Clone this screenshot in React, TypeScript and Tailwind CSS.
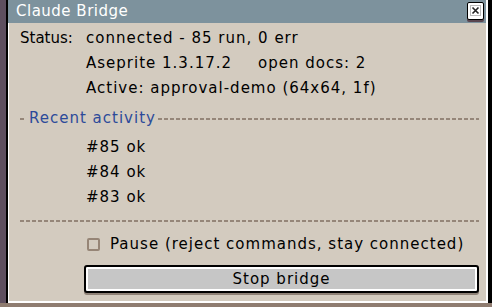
import type { ReactNode } from "react";

const dashes =
  "bg-[repeating-linear-gradient(90deg,#958679_0_4px,transparent_4px_6px)]";

function Row({ label, children }: { label?: string; children: ReactNode }) {
  return (
    <div className="flex h-[25px] items-center">
      <span className="w-[66px] shrink-0 tracking-normal">{label}</span>
      <span className="whitespace-pre">{children}</span>
    </div>
  );
}

export default function App() {
  const recent = [85, 84, 83];

  return (
    <div
      className="flex h-[307px] w-[492px] flex-col bg-[#8f7c70] text-[15px] tracking-[1px] text-black"
      style={{ fontFamily: '"DejaVu Sans", sans-serif' }}
    >
      <div className="flex flex-1">
        <div className="w-[6px] bg-[#5e4f5f]" />
        <div className="flex flex-1 flex-col border-l-2 border-r-4 border-black">
          {/* title bar */}
          <div className="flex h-[23px] items-center justify-between border-r-2 border-white bg-[#7d929d] pl-2 pr-[2px]">
            <span className="tracking-[0.5px] text-white">Claude Bridge</span>
            <div className="mb-[2px] flex h-[18px] w-[17px] items-center justify-center rounded-[2px] border border-black bg-white shadow-[0_2px_0_#5a4650]">
              <svg width="11" height="11" viewBox="0 0 11 11">
                <rect x="0.5" y="0.5" width="10" height="10" fill="none" stroke="#bbb" />
                <path d="M2.5 2.5 L8.5 8.5 M8.5 2.5 L2.5 8.5" stroke="#222" strokeWidth="1.6" />
              </svg>
            </div>
          </div>

          {/* body */}
          <div className="flex flex-1 flex-col border-b-2 border-l border-r-2 border-white bg-[#d3cbbf] pl-[11px] pr-[7px] pt-[3px]">
            <Row label="Status:">connected - 85 run, 0 err</Row>
            <Row>
              Aseprite 1.3.17.2<span className="ml-[26px]">open docs: 2</span>
            </Row>
            <Row>Active: approval-demo (64x64, 1f)</Row>

            <div className="mt-[5px] flex h-[25px] items-center">
              <div className={`h-[2px] w-[6px] ${dashes}`} />
              <span className="ml-[3px] mr-[2px] text-[#2c4a9a]">Recent activity</span>
              <div className={`h-[2px] flex-1 ${dashes}`} />
            </div>

            <div className="mt-[4px] flex flex-col">
              {recent.map((n) => (
                <Row key={n}>#{n} ok</Row>
              ))}
            </div>

            <div className={`mt-[10px] h-[2px] ${dashes}`} />

            <div className="mt-[10px] flex h-[25px] items-center pl-[67px]">
              <div className="h-[13px] w-[13px] rounded-[2px] border-2 border-[#968576]" />
              <span className="ml-[10px]">Pause (reject commands, stay connected)</span>
            </div>

            <div className="ml-[64px] mt-[8px] flex h-[28px] items-center justify-center rounded-[3px] border-2 border-black bg-[#c6c6c6] shadow-[inset_0_0_0_2px_white,0_2px_0_#8f8277]">
              Stop bridge
            </div>
          </div>
        </div>
      </div>
      <div className="h-[4px]" />
    </div>
  );
}
